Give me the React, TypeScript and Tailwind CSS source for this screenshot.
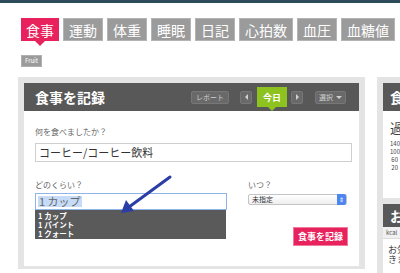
import React from 'react';

const tabs = ['食事', '運動', '体重', '睡眠', '日記', '心拍数', '血圧', '血糖値'];

function HeaderBtn({ children, className = '' }: { children: React.ReactNode; className?: string }) {
  return (
    <div
      className={`flex h-[13px] items-center justify-center rounded-[2px] border border-[#777] bg-[#696969] text-[7px] leading-none text-[#cfcfcf] ${className}`}
    >
      {children}
    </div>
  );
}

export default function App() {
  return (
    <div className="relative h-[273px] w-[400px] overflow-hidden bg-white font-['Noto_Sans_CJK_JP','Noto_Sans',sans-serif]">
      <div className="h-[3px] bg-[#2e4b5b]" />

      {/* nav tabs */}
      <div className="ml-[21px] mt-[15px] flex gap-[4px]">
        {tabs.map((t, i) => (
          <div key={t} className="relative">
            <div
              className={`flex h-[23px] items-center px-[5px] text-[14px] leading-none text-white ${
                i === 0 ? 'bg-[#e8225d]' : 'border border-[#b4b4b4] bg-[#9b9b9b]'
              }`}
            >
              {t}
            </div>
            {i === 0 && (
              <div className="absolute left-1/2 top-[23px] h-0 w-0 -translate-x-1/2 border-x-[5px] border-t-[5px] border-x-transparent border-t-[#e8225d]" />
            )}
          </div>
        ))}
      </div>

      <div className="ml-[21px] mt-[14px] flex h-[12px] w-[21px] items-center justify-center border border-[#b0b0b0] bg-[#9b9b9b] text-[6px] leading-none text-white">
        Fruit
      </div>

      <div className="mt-[10px] flex items-start">
        {/* main panel */}
        <div className="ml-[18px] w-[347px] bg-[#e4e4e4] px-[6px] pb-[3px] pt-[6px]">
          <div className="flex h-[28px] items-center bg-[#585858] pl-[11px] pr-[13px]">
            <div className="text-[14px] font-semibold leading-none text-white">食事を記録</div>
            <div className="ml-auto flex items-center">
              <HeaderBtn className="w-[38px]">レポート</HeaderBtn>
              <HeaderBtn className="ml-[11px] w-[12px]">
                <span className="h-0 w-0 border-y-[3px] border-r-[3px] border-y-transparent border-r-[#d0d0d0]" />
              </HeaderBtn>
              <div className="relative ml-[5px] flex h-[20px] w-[30px] items-center justify-center self-end bg-[#8dc21f] text-[9px] font-bold leading-none text-white">
                今日
                <div className="absolute left-1/2 top-[20px] h-0 w-0 -translate-x-1/2 border-x-[4px] border-t-[4px] border-x-transparent border-t-[#8dc21f]" />
              </div>
              <HeaderBtn className="ml-[4px] w-[12px]">
                <span className="h-0 w-0 border-y-[3px] border-l-[3px] border-y-transparent border-l-[#d0d0d0]" />
              </HeaderBtn>
              <HeaderBtn className="ml-[12px] w-[31px] gap-[3px]">
                選択
                <span className="h-0 w-0 border-x-[3px] border-t-[3px] border-x-transparent border-t-[#d0d0d0]" />
              </HeaderBtn>
            </div>
          </div>

          <div className="h-[155px] bg-white px-[11px] pt-[16px]">
            <div className="text-[8px] leading-[10px] text-[#666]">何を食べましたか？</div>
            <div className="mt-[6px] flex h-[19px] w-[317px] items-center border border-[#cfcfcf] pl-[3px] text-[11px] leading-none text-[#333]">
              コーヒー/コーヒー飲料
            </div>

            <div className="mt-[18px] flex">
              <div className="w-[213px]">
                <div className="text-[8px] leading-[10px] text-[#666]">どのくらい？</div>
                <div className="mt-[3px] flex h-[17px] w-[192px] items-center border border-[#8fb4ea] pl-[2px] text-[11px] leading-none text-[#666]">
                  <span className="bg-[#c6dbf7] px-[1px]">1 カップ</span>
                </div>
                <div className="flex h-[29px] w-[191px] flex-col justify-center bg-[#5a5a5a] pl-[3px] text-[7.5px] font-bold leading-[9px] text-white">
                  <div>1 カップ</div>
                  <div>1 パイント</div>
                  <div>1 クォート</div>
                </div>
              </div>
              <div className="w-[99px]">
                <div className="text-[8px] leading-[10px] text-[#666]">いつ？</div>
                <div className="mt-[4px] flex h-[11px] w-[99px] items-center rounded-[2px] border border-[#c4c4c4] bg-gradient-to-b from-white to-[#eee] pl-[3px] text-[7px] leading-none text-[#333]">
                  未指定
                  <div className="ml-auto h-[11px] w-[9px] rounded-r-[2px] bg-[#4d86f0] text-center text-[6px] leading-[11px] text-white">⇕</div>
                </div>
                <div className="ml-[45px] mt-[22px] flex h-[19px] w-[55px] items-center justify-center border border-[#f07a9c] bg-[#e8225d] text-[9px] font-bold leading-none text-white">
                  食事を記録
                </div>
              </div>
            </div>
          </div>
        </div>

        {/* right column */}
        <div className="ml-[12px] w-[60px] shrink-0 bg-[#e4e4e4] px-[6px] pt-[6px]">
          <div className="flex h-[28px] items-center bg-[#585858] pl-[7px] text-[14px] font-semibold leading-none text-white">食</div>
          <div className="h-[87px] bg-white pl-[7px] pt-[10px]">
            <div className="text-[13px] leading-none text-[#444]">過</div>
            <div className="mt-[6px] text-[6px] leading-[8px] text-[#444]">
              <div>140</div>
              <div>100</div>
              <div>&nbsp;60</div>
              <div>&nbsp;20</div>
            </div>
          </div>
          <div className="mt-[6px] flex h-[23px] items-center bg-[#585858] pl-[7px] text-[14px] font-semibold leading-none text-white">お</div>
          <div className="flex h-[12px] items-center border-b border-[#ddd] bg-[#f1f1f1] pl-[3px] text-[6px] leading-none text-[#555]">kcal</div>
          <div className="h-[40px] bg-white pl-[5px] pt-[6px] text-[9px] leading-[10px] text-[#444]">
            <div>お気</div>
            <div>きま</div>
          </div>
        </div>
      </div>

      {/* annotation arrow */}
      <svg className="absolute left-0 top-0" width="400" height="273" viewBox="0 0 400 273">
        <line x1="170" y1="177" x2="129" y2="207" stroke="#2a3ea6" strokeWidth="3" strokeLinecap="round" />
        <polygon points="121,213 126,200 134,211" fill="#2a3ea6" />
      </svg>
    </div>
  );
}
